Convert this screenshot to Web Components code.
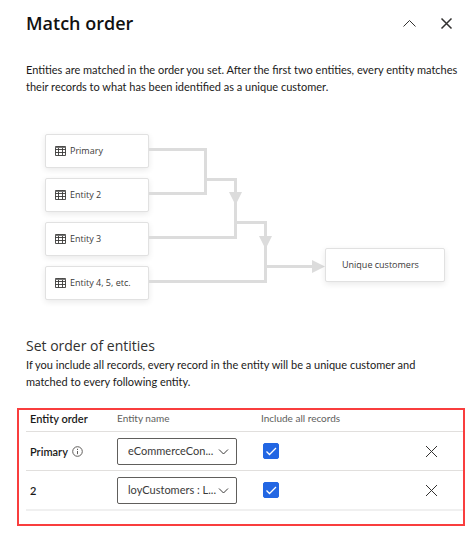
<!DOCTYPE html>
<html lang="en">
<head>
<meta charset="utf-8">
<meta name="viewport" content="width=device-width, initial-scale=1">
<title>Match order</title>
<style>
body { margin: 0; background: #fff; color: #1b1a19; font: 11px/17px Lato, "Open Sans", sans-serif; --display: "Open Sans", "Noto Sans", sans-serif; }
</style>
</head>
<body>
<match-panel></match-panel>
<script>
const define = (name, html, setup) => customElements.define(name, class extends HTMLElement {
  connectedCallback() {
    if (this.shadowRoot) return;
    const t = document.createElement('template');
    t.innerHTML = html;
    this.attachShadow({ mode: 'open' }).append(t.content.cloneNode(true));
    if (setup) setup(this, this.shadowRoot);
  }
});

const ICONS = {
  close: '<path d="M1 1 12 12M12 1 1 12"/>',
  cross: '<path d="M1.500 1.500 11.500 11.500M11.500 1.500 1.500 11.500"/>',
  up: '<path d="M.5 9.5 6.5 3.5 12.5 9.5"/>',
  down: '<path d="M2 4.5 6.5 9 11 4.5"/>',
  info: '<circle cx="6.5" cy="6.5" r="4.8"/><path d="M6.5 6V9.2M6.5 3.8V5"/>',
  table: '<path d="M1.500 1.500H11.500V10.500H1.500ZM1.500 4.500H11.500M1.500 7.500H11.500M4.500 1.500V10.500M8.500 1.500V10.500" stroke-width=".9"/><path d="M1.500 2.500H11.500" stroke="#777"/>'
};

define('ui-icon', `<style>
  :host { display: inline-flex; flex: none; width: 13px; height: 13px; }
  svg { width: 13px; height: 13px; fill: none; stroke: currentColor; stroke-width: var(--stroke, 1); }
</style><svg viewBox="0 0 13 13" aria-hidden="true"></svg>`,
  (el, root) => { root.querySelector('svg').innerHTML = ICONS[el.getAttribute('name')]; });

define('icon-button', `<style>
  :host { display: inline-flex; color: #323130; }
  button { display: flex; padding: 4px; border: 0; background: none; color: inherit; cursor: pointer; }
</style><button type="button"><ui-icon></ui-icon></button>`,
  (el, root) => {
    const icon = document.createElement('ui-icon');
    icon.setAttribute('name', el.getAttribute('name'));
    root.querySelector('ui-icon').replaceWith(icon);
    root.querySelector('button').setAttribute('aria-label', el.getAttribute('label'));
  });

define('panel-header', `<style>
  :host { display: flex; align-items: center; justify-content: space-between; height: 46px; padding: 0 16px 0 26px; }
  h1 { margin: 0; font: 600 18px/24px var(--display); color: #111; }
  div { display: flex; gap: 16px; }
  .close { --stroke: 1.5; }
</style><h1><slot></slot></h1>
<div><icon-button name="up" label="Collapse"></icon-button><icon-button class="close" name="cross" label="Close"></icon-button></div>`);

define('flow-node', `<style>
  :host { display: flex; align-items: center; gap: 3px; box-sizing: border-box; height: 34px; padding: 0 8px;
    border: 1px solid #e1e1e1; border-radius: 2px; background: #fff; box-shadow: 0 2px 6px rgb(0 0 0 / 9%);
    font: 9px/14px var(--display); color: #3b3a39; white-space: nowrap; }
  :host([plain]) { padding: 0 16px; }
  :host([plain]) ui-icon { display: none; }
</style><ui-icon name="table"></ui-icon><span><slot></slot></span>`);

define('match-flow', `<style>
  :host { display: grid; grid-template-columns: 104px 176px minmax(100px, 120px); padding: 0 0 0 45px; }
  .sources { display: grid; gap: 10px; }
  svg { width: 176px; height: 166px; fill: none; stroke: #dcdcdc; stroke-width: 3; }
  .heads { fill: #dcdcdc; stroke: none; }
  .result { padding-top: 114px; }
</style>
<div class="sources"><flow-node>Primary</flow-node><flow-node>Entity 2</flow-node><flow-node>Entity 3</flow-node><flow-node>Entity 4, 5, etc.</flow-node></div>
<svg viewBox="0 0 176 166" aria-hidden="true">
  <path d="M0 15.500H56.500V59.500H0M56.500 45.500H86.500V103.500H0M86.500 88.500H116.500V147.500H0M116.500 132.500H166"/>
  <path class="heads" d="M80 58H93L86.500 71ZM110 102H123L116.500 115ZM163 126V139L176 132.500Z"/>
</svg>
<div class="result"><flow-node plain>Unique customers</flow-node></div>`);

define('entity-select', `<style>
  :host { display: grid; width: 120px; align-items: center; color: #3b3a39; }
  select, ui-icon { grid-area: 1 / 1; }
  select { appearance: none; box-sizing: border-box; width: 100%; height: 27px; margin: 0; padding: 0 10px 1px; border: 1px solid #605e5c;
    border-radius: 2px; background: #fff; color: inherit; font: inherit; }
  ui-icon { justify-self: end; margin-right: 7px; pointer-events: none; }
</style><select><option></option></select><ui-icon name="down"></ui-icon>`,
  (el, root) => {
    root.querySelector('option').textContent = el.getAttribute('value');
    root.querySelector('select').setAttribute('aria-label', el.getAttribute('label'));
  });

define('check-box', `<style>
  :host { display: flex; padding-left: 2px; }
  label { display: grid; }
  input, svg { grid-area: 1 / 1; width: 16px; height: 16px; margin: 0; }
  input { appearance: none; border-radius: 2px; border: 1px solid #2266e3; background: #fff; }
  input:checked { background: #2266e3; }
  svg { fill: none; stroke: #fff; stroke-width: 1.3; pointer-events: none; }
</style><label><input type="checkbox" checked><svg viewBox="0 0 16 16" aria-hidden="true"><path d="M3.500 8.500 6.500 11.500 13 5"/></svg></label>`,
  (el, root) => root.querySelector('input').setAttribute('aria-label', el.getAttribute('label')));

define('entity-table', `<style>
  :host { display: block; margin: 0 8px 0 17px; padding: 0 0 13px 7px; border: 2px solid #f93e3e; }
  table { width: 100%; border-collapse: separate; border-spacing: 0; table-layout: fixed; }
  th, td { height: 38px; padding: 0; border-bottom: 1px solid #e1dfdd; text-align: left; vertical-align: middle; }
  thead th { height: 21px; font-size: 10px; line-height: 17px; font-weight: 400; color: #605e5c; vertical-align: top; }
  th:first-child { padding-left: 4px; font-size: 11px; font-weight: 600; color: #1b1a19; }
  .order { width: 87px; } .name { width: 144px; } .all { width: 160px; }
  tbody tr:last-child > * { border-bottom: 2px solid #f0f0f0; }
  .cell { display: flex; align-items: center; gap: 3px; }
  ui-icon { color: #605e5c; }
</style>
<table>
  <thead><tr><th class="order" scope="col">Entity order</th><th class="name" scope="col">Entity name</th><th class="all" scope="col">Include all records</th><th aria-label="Remove"></th></tr></thead>
  <tbody>
    <tr><th scope="row"><span class="cell">Primary <ui-icon name="info"></ui-icon></span></th>
      <td><entity-select value="eCommerceCon..." label="Entity name, primary"></entity-select></td>
      <td><check-box label="Include all records, primary"></check-box></td>
      <td><icon-button name="close" label="Remove primary"></icon-button></td></tr>
    <tr><th scope="row">2</th>
      <td><entity-select value="loyCustomers : L..." label="Entity name, 2"></entity-select></td>
      <td><check-box label="Include all records, 2"></check-box></td>
      <td><icon-button name="close" label="Remove 2"></icon-button></td></tr>
  </tbody>
</table>`);

define('match-panel', `<style>
  :host { display: block; }
  p { margin: 0; padding: 0 4px 0 26px; }
  .intro { padding-top: 15px; }
  match-flow { margin-top: 39px; }
  h2 { margin: 36px 0 0; padding-left: 26px; font: 400 14px/20px var(--display); color: #323130; }
  .note { padding-right: 32px; }
  entity-table { margin-top: 18px; }
</style>
<panel-header>Match order</panel-header>
<main>
  <p class="intro">Entities are matched in the order you set. After the first two entities, every entity matches their records to what has been identified as a unique customer.</p>
  <match-flow></match-flow>
  <h2>Set order of entities</h2>
  <p class="note">If you include all records, every record in the entity will be a unique customer and matched to every following entity.</p>
  <entity-table></entity-table>
</main>`);
</script>
</body>
</html>
